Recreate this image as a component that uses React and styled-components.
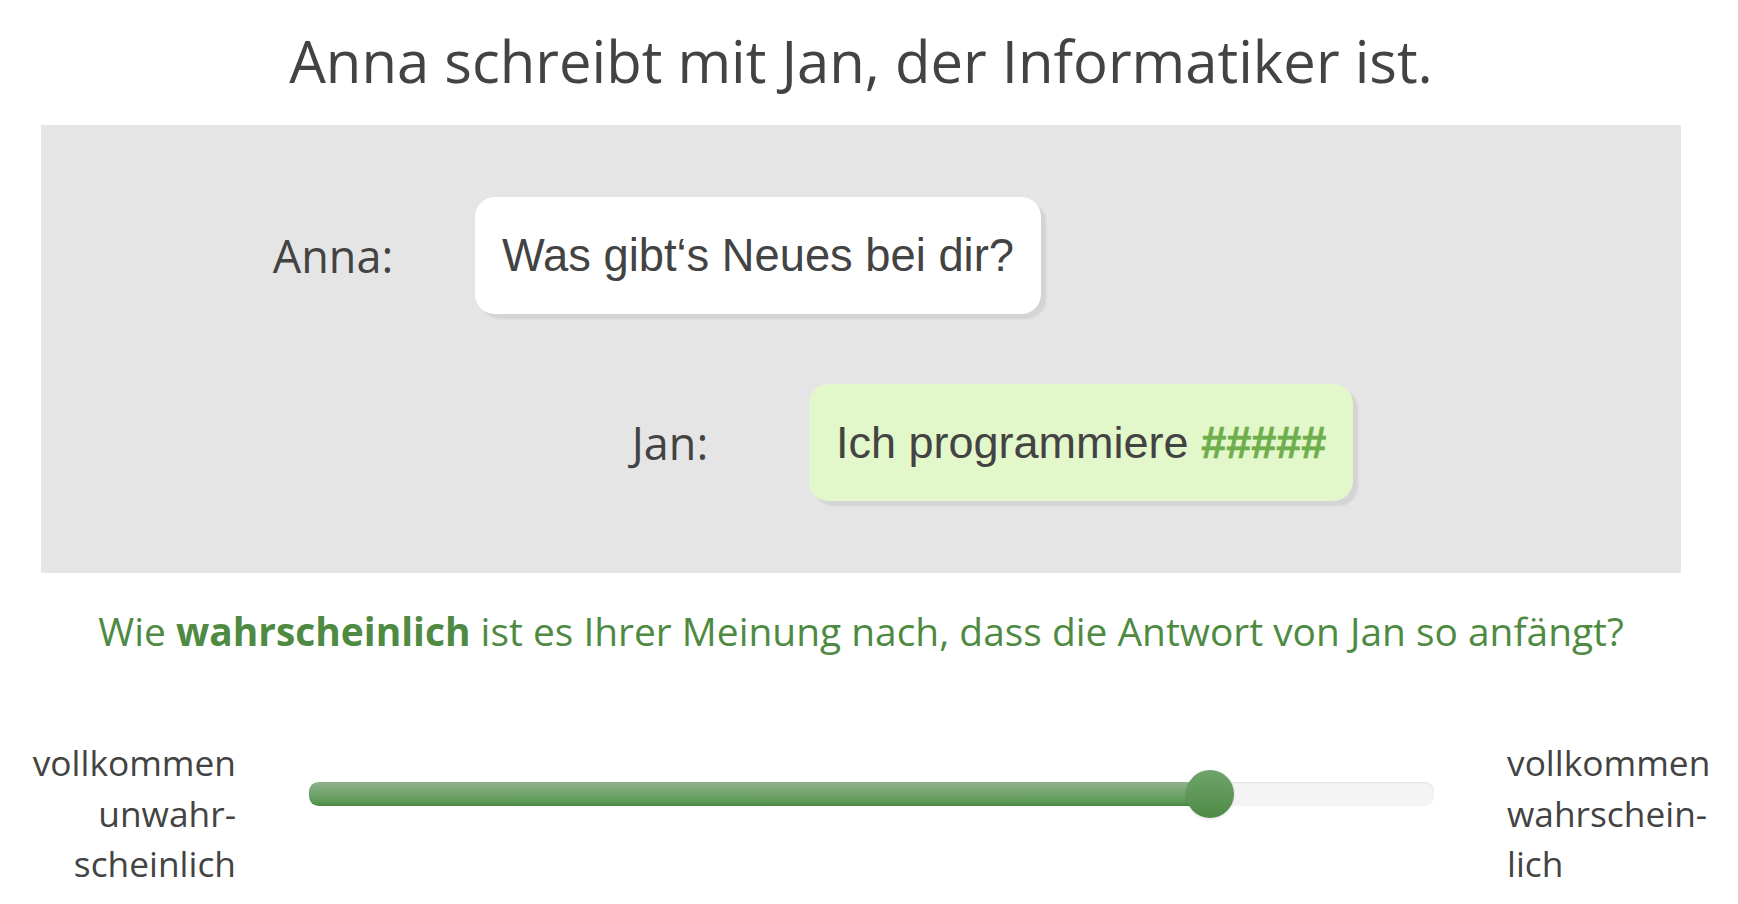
import React from "react";
import styled, { createGlobalStyle } from "styled-components";

const Global = createGlobalStyle`
  html, body { margin: 0; padding: 0; background: #ffffff; }
  body { font-family: "Open Sans", "Noto Sans", sans-serif; color: #434343; }
`;

const Page = styled.div`
  width: 1722px;
  display: flex;
  flex-direction: column;
  align-items: stretch;
`;

const Title = styled.h1`
  margin: 21px 0 24px;
  font-size: 58px;
  font-weight: 400;
  line-height: 80px;
  text-align: center;
  color: #434343;
`;

const Chat = styled.section`
  margin: 0 41px;
  background: #e5e5e5;
  padding: 72px 0;
  display: flex;
  flex-direction: column;
  gap: 70px;
`;

const Row = styled.div`
  display: flex;
  align-items: center;
  padding-left: ${(p) => p.$indent}px;
`;

const Speaker = styled.div`
  width: 250px;
  text-align: center;
  font-size: 45px;
  color: #434343;
  margin-right: ${(p) => p.$gap}px;
`;

const Bubble = styled.div`
  font-family: "Liberation Sans", Arial, sans-serif;
  font-size: ${(p) => (p.$mine ? 45 : 45.3)}px;
  line-height: 61px;
  color: #434343;
  padding: 28px 27px;
  border-radius: 20px;
  background: ${(p) => (p.$mine ? "#e2f7ca" : "#ffffff")};
  box-shadow: 5px 5px 2px rgba(0, 0, 0, 0.075);
`;

const Hash = styled.span`
  color: #6fae4d;
  font-weight: 700;
  -webkit-text-stroke: 0.6px #6fae4d;
`;

const Question = styled.p`
  margin: 31px 0 0;
  font-size: 38.9px;
  text-align: center;
  color: #4e8a42;
  strong { font-weight: 700; }
`;

const SliderRow = styled.div`
  margin: 80px 0 0 30px;
  display: flex;
  align-items: flex-start;
  gap: 73px;
`;

const End = styled.div`
  flex: 0 0 ${(p) => p.$w}px;
  font-size: 35.3px;
  line-height: 50.5px;
  color: #434343;
  text-align: ${(p) => p.$align};
  white-space: nowrap;
`;

const TrackArea = styled.div`
  position: relative;
  flex: 0 0 1125px;
  height: 48px;
  margin-top: 33px;
  display: flex;
  align-items: center;
`;

const Track = styled.div`
  position: relative;
  width: 100%;
  height: 24px;
  border-radius: 9px;
  background: #f4f4f4;
  box-shadow: inset 0 1px 2px rgba(0, 0, 0, 0.08);
  overflow: hidden;
`;

const Fill = styled.div`
  height: 100%;
  background: linear-gradient(#8fb18c, #5f9a58 80%, #4b8743);
  border-radius: 9px 0 0 9px;
`;

const Thumb = styled.div`
  position: absolute;
  top: 0;
  width: 48px;
  height: 48px;
  margin-left: -24px;
  border-radius: 50%;
  background: linear-gradient(#6fa46b, #4e8a46);
  box-shadow: 0 1px 3px rgba(0, 0, 0, 0.12);
`;

const value = 0.801;

export default function App() {
  return (
    <>
      <Global />
      <Page>
        <Title>Anna schreibt mit Jan, der Informatiker ist.</Title>
        <Chat>
          <Row $indent={167}>
            <Speaker $gap={17}>Anna:</Speaker>
            <Bubble>Was gibt‘s Neues bei dir?</Bubble>
          </Row>
          <Row $indent={504}>
            <Speaker $gap={14}>Jan:</Speaker>
            <Bubble $mine>
              Ich programmiere <Hash>#####</Hash>
            </Bubble>
          </Row>
        </Chat>
        <Question>
          Wie <strong>wahrscheinlich</strong> ist es Ihrer Meinung nach, dass die Antwort von Jan so anfängt?
        </Question>
        <SliderRow>
          <End $w={206} $align="right">
            vollkommen
            <br />
            unwahr-
            <br />
            scheinlich
          </End>
          <TrackArea>
            <Track>
              <Fill style={{ width: `${value * 100}%` }} />
            </Track>
            <Thumb style={{ left: `${value * 100}%` }} />
          </TrackArea>
          <End $w={210} $align="left">
            vollkommen
            <br />
            wahrschein-
            <br />
            lich
          </End>
        </SliderRow>
      </Page>
    </>
  );
}
